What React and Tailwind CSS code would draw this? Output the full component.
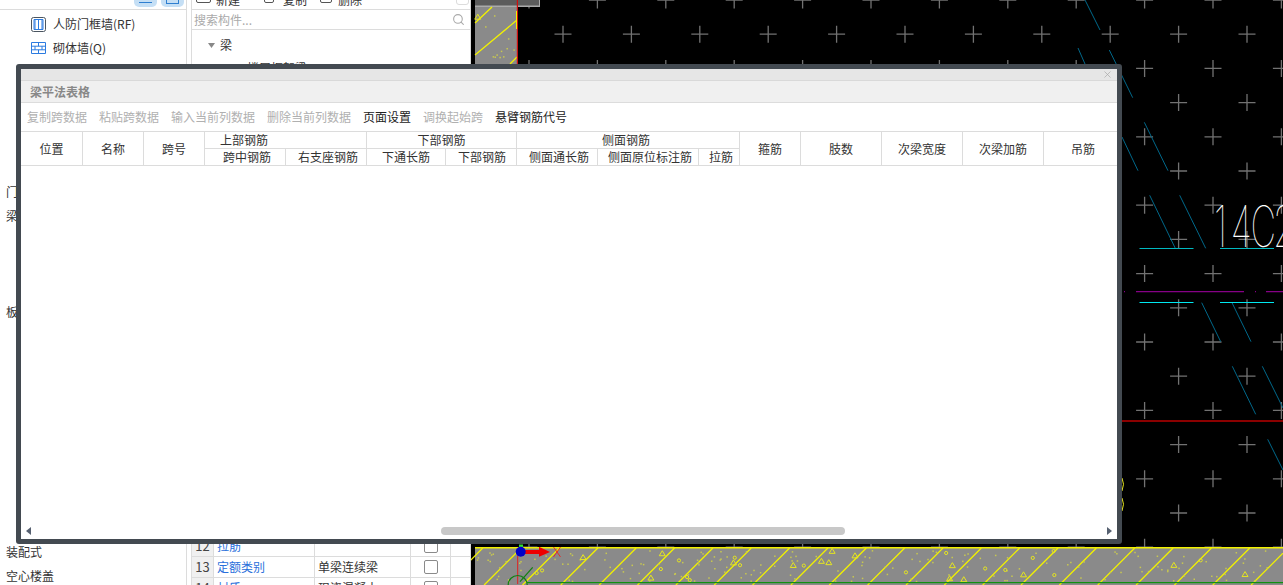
import { Search, X } from 'lucide-react'

const headCols =
  'grid-cols-[62px_61px_61px_81px_81px_79px_71px_81px_101px_41px_61px_81px_81px_81px_73px]'

const tools = [
  ['复制跨数据', false],
  ['粘贴跨数据', false],
  ['输入当前列数据', false],
  ['删除当前列数据', false],
  ['页面设置', true],
  ['调换起始跨', false],
  ['悬臂钢筋代号', true],
]

const groups = { 8: '门窗洞', 9: '梁', 13: '板', 23: '装配式', 24: '空心楼盖' }

const propRows = [
  ['12', '拉筋', ''],
  ['13', '定额类别', '单梁连续梁'],
  ['14', '材质', '现浇混凝土'],
]

// cad drawing data, in page coordinates
const crosses = []
for (let k = 0; k <= 16; k++) {
  const y = 34.2 * k
  for (let j = 0; j < 12; j++) {
    crosses.push([(k % 2 ? 563 : 529) + 68.4 * j, y])
  }
}

const rebars = [
  [1085, 0, 1100, 30],
  [1078, 48, 1085, 64],
  [1109.3, 50, 1132.7, 97.7],
  [1122, 137, 1138, 170.7],
  [1144.3, 122.3, 1168, 170.7],
  [1149.7, 195.3, 1175.3, 248.3],
  [1179.7, 195.3, 1205.7, 248.3],
  [1201.7, 302.7, 1220.7, 341.7],
  [1232, 302.7, 1251, 341.7],
  [1232.3, 366.3, 1255.7, 414.3],
  [1262.3, 366.3, 1283, 408],
  [1267.7, 439.3, 1283, 470],
]

const hatch = []
for (let x = 482.8; x < 1330; x += 38.35) hatch.push(x)

// fixed pseudo random specks for the concrete fill
function specks(count, x0, x1, y0, y1, seed) {
  const out = []
  let s = seed
  const next = () => {
    s = (s * 9301 + 49297) % 233280
    return s / 233280
  }
  for (let i = 0; i < count; i++) {
    out.push([x0 + next() * (x1 - x0), y0 + next() * (y1 - y0), next()])
  }
  return out
}

const bandSpecks = specks(190, 476, 1283, 550, 581, 17)
const blockSpecks = specks(12, 477, 515, 9, 62, 5)

function Speck({ x, y, r }) {
  if (r > 0.93) {
    return <path d={`M${x} ${y - 3}l3 5h-6z`} fill="none" stroke="#e6e620" strokeWidth="1" />
  }
  if (r > 0.84) {
    return <circle cx={x} cy={y} r="1.6" fill="none" stroke="#e6e620" strokeWidth="1" />
  }
  return <rect x={x} y={y} width="1.5" height="1.5" fill="#c8c850" />
}

function CadCanvas() {
  return (
    <svg viewBox="471 0 812 585" className="block w-full h-full bg-black">
      {crosses.map(([x, y], i) => (
        <path
          key={i}
          d={`M${x - 8.5} ${y}h17M${x} ${y - 8.5}v17`}
          stroke="#727272"
          strokeWidth="1.3"
        />
      ))}

      {/* wall block, top left */}
      <rect x="475" y="0" width="65" height="7" fill="#aaaaaa" />
      <rect x="475" y="0" width="64" height="5.5" fill="#5c5c5c" />
      <rect x="475" y="7" width="42" height="58" fill="#8a8a8a" />
      <path
        d="M475 23L492 7M475 55L517 20M510 64L517 57"
        stroke="#f2f200"
        strokeWidth="1.3"
      />
      {blockSpecks.map(([x, y, r], i) => (
        <Speck key={i} x={x} y={y} r={r} />
      ))}
      <rect x="516.8" y="0" width="1.2" height="65" fill="#d01010" />
      <rect x="516" y="11" width="1" height="18" fill="#f2f200" />

      {/* rebars and lines */}
      {rebars.map(([a, b, c, d], i) => (
        <line key={i} x1={a} y1={b} x2={c} y2={d} stroke="#00688a" strokeWidth="1" />
      ))}
      <path d="M1139.5 248.5h54M1220 248.5h54" stroke="#00b8c0" strokeWidth="1" />
      <path d="M1139.5 302.5h54M1220 302.5h54" stroke="#00e8f0" strokeWidth="1" />
      <path
        d="M1136 291.7h108M1266 291.7h17M1124 291.7h1M1255 291.7h1"
        stroke="#860086"
        strokeWidth="1.2"
      />
      <rect x="1122" y="420" width="161" height="2" fill="#8b0000" />
      <path d="M1122 478q3 6 0 13M1122 498q3 6 0 13" fill="none" stroke="#e6e620" strokeWidth="1" />
      <text
        x="0 27 59 95"
        y="0"
        transform="translate(1214 247) scale(0.62 1)"
        fontFamily="Inter, sans-serif"
        fontWeight="100"
        fontSize="57"
        fill="#ffffff"
      >
        14C2
      </text>

      {/* slab band at the bottom */}
      <rect x="475" y="547" width="808" height="38" fill="#8a8a8a" />
      {hatch.map((x, i) => (
        <line key={i} x1={x} y1="548" x2={x - 37} y2="585" stroke="#f2f200" strokeWidth="1.3" />
      ))}
      {bandSpecks.map(([x, y, r], i) => (
        <Speck key={i} x={x} y={y} r={r} />
      ))}
      <rect x="475" y="547" width="808" height="1.5" fill="#f2f200" />
      <rect x="527" y="582" width="756" height="1.2" fill="#109010" />

      {/* ucs marker */}
      <path d="M517.7 556V584" stroke="#e02020" strokeWidth="1" />
      <rect x="519" y="544.5" width="4" height="3" fill="#30e030" />
      <path d="M520 581.7L532.7 567.3" stroke="#108010" strokeWidth="1.2" />
      <circle cx="517.7" cy="585" r="9.5" fill="none" stroke="#108010" strokeWidth="1.2" />
      <rect x="525" y="550" width="15" height="4" fill="#ee0000" />
      <path d="M539 546.7L550 552L539 556.8z" fill="#ee0000" />
      <circle cx="520.7" cy="551.7" r="5" fill="#0000c8" />
      <path d="M553.5 547L560.5 557M560.5 547L553.5 557" stroke="#ee2020" strokeWidth="0.9" />
    </svg>
  )
}

function LeftPanel() {
  return (
    <div className="w-[471px] shrink-0 h-full bg-white flex overflow-hidden text-xs text-[#333]">
      {/* component tree */}
      <div className="w-[187px] shrink-0 border-r border-[#dcdcdc]">
        <div className="h-[10px] border-b border-[#dcdcdc] overflow-hidden flex justify-end gap-[4px] pr-[2px]">
          <div className="w-[23px] h-[7px] rounded-b-[5px] bg-[#c5dff5] flex justify-center">
            <div className="w-[13px] h-[3px] border-b border-[#2f7fd0]" />
          </div>
          <div className="w-[23px] h-[7px] rounded-b-[5px] bg-[#c5dff5] flex justify-center">
            <div className="w-[13px] h-[4px] border border-t-0 border-[#2f7fd0]" />
          </div>
        </div>
        <div className="pt-[2px]">
          <div className="h-[24px] flex items-center pl-[31px] gap-[7px]">
            <svg width="15" height="15" viewBox="0 0 15 15" fill="none">
              <rect x="0.5" y="0.5" width="14" height="14" rx="2" stroke="#4a5560" />
              <path d="M4 2.5v10M7.5 2.5v10M11 2.5v10M3 2.5h9v10H3z" stroke="#2c7be0" />
            </svg>
            <span>人防门框墙(RF)</span>
          </div>
          <div className="h-[24px] flex items-center pl-[31px] gap-[7px]">
            <svg width="15" height="12" viewBox="0 0 15 12" fill="none">
              <path
                d="M.5.5h14v11H.5zM.5 4.2h14M.5 7.8h14M7.5.5v3.7M4 4.2v3.6M11 4.2v3.6M7.5 7.8v3.7"
                stroke="#2c7be0"
              />
            </svg>
            <span>砌体墙(Q)</span>
          </div>
          {Array.from({ length: 23 }, (_, i) => i + 3).map((n) => (
            <div key={n} className="h-[24px] flex items-center pl-[6px] whitespace-nowrap">
              {groups[n]}
            </div>
          ))}
        </div>
      </div>

      {/* component list and properties */}
      <div className="w-[280px] ml-[4px] shrink-0 border-r border-l border-[#dcdcdc] flex flex-col">
        <div className="h-[10px] border-b border-[#dcdcdc] overflow-hidden relative">
          <div className="flex items-end h-[3px] pl-[4px]">
            <div className="w-[15px] h-[8px] shrink-0 border border-[#555] rounded-[2px]" />
            <span className="ml-[5px] w-[48px] shrink-0 leading-[6px]">新建</span>
            <div className="w-[10px] h-[8px] shrink-0 border border-[#555] rounded-[2px]" />
            <span className="ml-[9px] w-[37px] shrink-0 leading-[6px]">复制</span>
            <div className="w-[12px] h-[8px] shrink-0 border border-[#555] rounded-[2px]" />
            <span className="ml-[6px] leading-[6px]">删除</span>
          </div>
          <div className="absolute top-[-4px] right-[1px] w-[13px] h-[9px] border border-[#dcdcdc] rounded-[3px]" />
        </div>
        <div className="h-[20px] border-b border-[#dcdcdc] flex items-center justify-between pl-[2px] pr-[5px] text-[#aaa]">
          <span>搜索构件...</span>
          <Search size={13} strokeWidth={2} />
        </div>
        <div className="h-[30px] flex items-center pl-[16px]">
          <svg width="7" height="5" viewBox="0 0 7 5">
            <path d="M0 0h7L3.5 5z" fill="#888" />
          </svg>
          <span className="ml-[5px]">梁</span>
        </div>
        <div className="pl-[55px] leading-[16px] whitespace-nowrap">楼层框架梁</div>

        <div className="mt-auto mb-[-14px]">
          {propRows.map(([no, name, value]) => (
            <div
              key={no}
              className="grid grid-cols-[22px_101px_96px_40px] h-[21px] border-b border-[#dcdcdc]"
            >
              <div className="bg-[#f0f0f0] border-r border-[#dcdcdc] flex items-center justify-center text-[13px] text-[#444]">
                {no}
              </div>
              <div className="border-r border-[#dcdcdc] flex items-center pl-[3px] text-[#2a6fdb]">
                {name}
              </div>
              <div className="border-r border-[#dcdcdc] flex items-center pl-[3px]">{value}</div>
              <div className="border-r border-[#dcdcdc] flex items-center justify-center">
                <div className="w-[14px] h-[14px] rounded-[2px] border border-[#8a8a8a]" />
              </div>
            </div>
          ))}
        </div>
      </div>
    </div>
  )
}

function HeadCell({ className = '', children }) {
  return (
    <div
      className={`border-r border-b border-[#dcdcdc] flex items-center justify-center whitespace-nowrap ${className}`}
    >
      {children}
    </div>
  )
}

function BeamTableModal() {
  return (
    <div className="absolute left-[16px] top-[64px] w-[1106px] h-[480px] border-[5px] border-[#434a51] rounded-[3px] bg-white flex flex-col text-xs text-[#333]">
      <div className="h-[12px] shrink-0 bg-[#e6e6e6] border-b border-[#d9d9d9] flex items-center justify-end pr-[4px]">
        <X size={11} strokeWidth={1.5} className="text-[#a8a8a8]" />
      </div>
      <div className="h-[22px] shrink-0 bg-[#f0f0f0] border-b border-[#dcdcdc] flex items-center pl-[9px] font-bold text-[#888]">
        梁平法表格
      </div>
      <div className="h-[28px] shrink-0 flex items-center gap-[12px] pl-[6px]">
        {tools.map(([label, active]) => (
          <span key={label} className={active ? 'text-[#222]' : 'text-[#b0b0b0]'}>
            {label}
          </span>
        ))}
      </div>

      {/* header of the table */}
      <div className={`grid ${headCols} grid-rows-[17px_17px] shrink-0 border-t border-[#dcdcdc]`}>
        <HeadCell className="row-span-2">位置</HeadCell>
        <HeadCell className="row-span-2">名称</HeadCell>
        <HeadCell className="row-span-2">跨号</HeadCell>
        <HeadCell className="col-span-2 justify-start pl-[15px]">上部钢筋</HeadCell>
        <HeadCell className="col-span-2">下部钢筋</HeadCell>
        <HeadCell className="col-span-3 pr-[4px]">侧面钢筋</HeadCell>
        <HeadCell className="row-span-2">箍筋</HeadCell>
        <HeadCell className="row-span-2">肢数</HeadCell>
        <HeadCell className="row-span-2">次梁宽度</HeadCell>
        <HeadCell className="row-span-2">次梁加筋</HeadCell>
        <HeadCell className="row-span-2 border-r-0 pl-[5px]">吊筋</HeadCell>
        <HeadCell className="pl-[4px]">跨中钢筋</HeadCell>
        <HeadCell className="pl-[4px]">右支座钢筋</HeadCell>
        <HeadCell>下通长筋</HeadCell>
        <HeadCell className="pl-[2px]">下部钢筋</HeadCell>
        <HeadCell className="pl-[4px]">侧面通长筋</HeadCell>
        <HeadCell className="pl-[4px]">侧面原位标注筋</HeadCell>
        <HeadCell className="pl-[4px]">拉筋</HeadCell>
      </div>

      {/* horizontal scroll bar */}
      <div className="mt-auto mb-[4px] h-[8px] flex items-center">
        <svg width="5" height="8" viewBox="0 0 5 8" className="ml-[5px]">
          <path d="M5 0v8L0 4z" fill="#566070" />
        </svg>
        <div className="ml-[410px] w-[404px] h-[8px] rounded-full bg-[#c8c8c8]" />
        <svg width="5" height="8" viewBox="0 0 5 8" className="ml-auto mr-[5px]">
          <path d="M0 0v8l5-4z" fill="#566070" />
        </svg>
      </div>
    </div>
  )
}

export default function App() {
  return (
    <div className="relative w-[1283px] h-[585px] overflow-hidden flex bg-black font-['Noto_Sans_CJK_SC',sans-serif]">
      <LeftPanel />
      <div className="flex-1 h-full">
        <CadCanvas />
      </div>
      <BeamTableModal />
    </div>
  )
}
